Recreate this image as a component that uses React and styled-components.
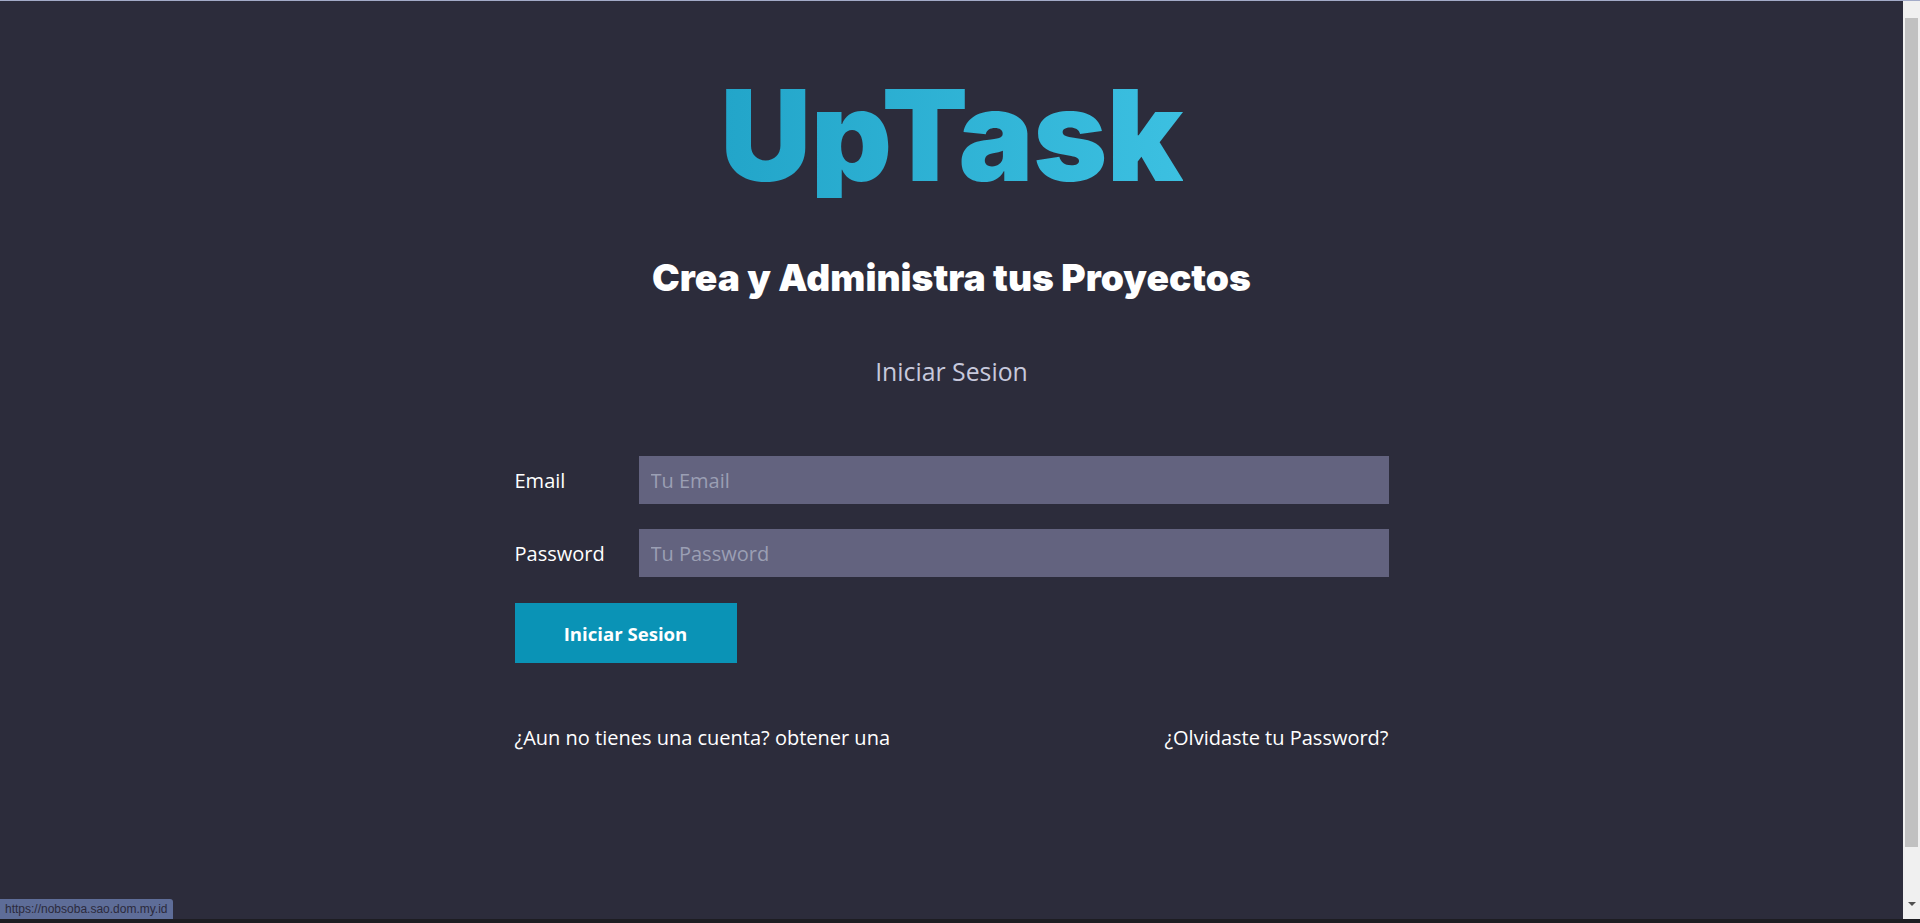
import React from 'react'
import styled, { createGlobalStyle } from 'styled-components'

const GlobalStyle = createGlobalStyle`
    body {
        margin: 0;
        background: #2c2c3b;
        font-family: "Open Sans", "Noto Sans", sans-serif;
        color: #fff;
        overflow: hidden;
    }
    * {
        box-sizing: border-box;
    }
`

const App = () => {
    return (<>
        <GlobalStyle />
        <Page>
            <Logo>UpTask</Logo>
            <Tagline>Crea y Administra tus Proyectos</Tagline>
            <FormTitle>Iniciar Sesion</FormTitle>
            <Form onSubmit={e => e.preventDefault()}>
                <Field>
                    <Label htmlFor='email'>Email</Label>
                    <Input id='email' type='email' placeholder='Tu Email' />
                </Field>
                <Field>
                    <Label htmlFor='password'>Password</Label>
                    <Input id='password' type='password' placeholder='Tu Password' />
                </Field>
                <Submit type='submit'>Iniciar Sesion</Submit>
            </Form>
            <Links>
                <Link href='#'>¿Aun no tienes una cuenta? obtener una</Link>
                <Link href='#'>¿Olvidaste tu Password?</Link>
            </Links>
        </Page>
        <Scrollbar>
            <ScrollArrow $dir='up' />
            <ScrollThumb />
            <ScrollArrow $dir='down' />
        </Scrollbar>
        <StatusBubble>https://nobsoba.sao.dom.my.id</StatusBubble>
        <BottomEdge />
    </>)
}

export default App

const Page = styled.main`
    min-height: 100vh;
    display: flex;
    flex-direction: column;
    align-items: center;
    padding: 71px 17px 0 0;
    border-top: 1px solid #a3abc8;
`

const Logo = styled.h1`
    margin: 0;
    font-family: Inter, sans-serif;
    font-weight: 900;
    font-size: 126px;
    line-height: 1;
    letter-spacing: -0.5px;
    background: linear-gradient(90deg, #22a5c9 0%, #3cc0e1 100%);
    -webkit-background-clip: text;
    background-clip: text;
    color: transparent;
`

const Tagline = styled.h2`
    margin: 61px 0 0;
    font-family: Inter, sans-serif;
    font-weight: 900;
    font-size: 37.2px;
    line-height: 1;
    color: #fff;
`

const FormTitle = styled.p`
    margin: 63px 0 0;
    font-size: 24.8px;
    line-height: 1;
    color: #c7c9dc;
`

const Form = styled.form`
    width: 874px;
    margin-top: 72px;
    display: flex;
    flex-direction: column;
    gap: 25px;
`

const Field = styled.div`
    display: flex;
    align-items: center;
`

const Label = styled.label`
    flex: 0 0 124px;
    font-size: 20px;
    color: #fff;
`

const Input = styled.input`
    flex: 1;
    height: 48px;
    padding: 0 12px;
    border: none;
    outline: none;
    background: #63637f;
    color: #fff;
    font-family: "Open Sans", sans-serif;
    font-size: 20px;

    &::placeholder {
        color: #9b9fb4;
    }
`

const Submit = styled.button`
    align-self: flex-start;
    width: 222px;
    height: 60px;
    margin-top: 1px;
    border: none;
    background: #0a93b6;
    color: #fff;
    font-family: "Open Sans", sans-serif;
    font-weight: 700;
    font-size: 18.6px;
    cursor: pointer;
`

const Links = styled.nav`
    width: 874px;
    margin-top: 61px;
    display: flex;
    justify-content: space-between;
`

const Link = styled.a`
    font-size: 20px;
    color: #fff;
    text-decoration: none;
`

const Scrollbar = styled.div`
    position: fixed;
    top: 1px;
    right: 0;
    bottom: 4px;
    width: 17px;
    display: flex;
    flex-direction: column;
    align-items: center;
    background: #f0f0f0;
`

const ScrollArrow = styled.div`
    flex: 0 0 17px;
    width: 0;
    margin-top: ${p => (p.$dir === 'up' ? '6px' : '7px')};
    height: 0;
    border-left: 4px solid transparent;
    border-right: 4px solid transparent;
    ${p => (p.$dir === 'up'
        ? 'border-bottom: 4px solid #a3a3a3;'
        : 'border-top: 4px solid #505050;')}
`

const ScrollThumb = styled.div`
    flex: 1;
    width: 13px;
    margin: -6px 0 48px;
    background: #c1c1c1;
`

const StatusBubble = styled.div`
    position: fixed;
    left: 0;
    bottom: 4px;
    height: 20px;
    padding: 0 5px;
    display: flex;
    align-items: center;
    background: #5e6d98;
    border-top-right-radius: 3px;
    color: #2b2a3c;
    font-family: "Liberation Sans", Arial, sans-serif;
    font-size: 12px;
`

const BottomEdge = styled.div`
    position: fixed;
    left: 0;
    right: 0;
    bottom: 0;
    height: 4px;
    background: #1d1d22;
`
